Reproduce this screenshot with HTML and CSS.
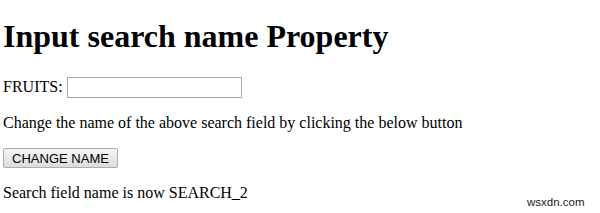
FILE: index.html
```html
<!DOCTYPE html>
<html lang="en">
<head>
<meta charset="utf-8">
<title>Input search name Property</title>
<link rel="stylesheet" href="styles.css">
</head>
<body>
  <h1>Input search name Property</h1>
  <p class="field">FRUITS: <input type="search" id="fruits" name="SEARCH_1"></p>
  <p>Change the name of the above search field by clicking the below button</p>
  <button type="button" class="change">CHANGE NAME</button>
  <p class="result">Search field name is now SEARCH_2</p>
  <div class="watermark">wsxdn.com</div>
</body>
</html>
```

FILE: styles.css
```css
body{
  margin: 0 3px;
  font-family: "Liberation Serif", "Times New Roman", serif;
  font-size: 16px;
  color: #000;
  background: #fff;
}
h1{
  font-size: 32px;
  margin: 18px 0 22px 0;
}
p{
  margin: 0 0 16px 0;
}
.field input{
  width: 175px;
  height: 21px;
  box-sizing: border-box;
  border: 1px solid #a9a9a9;
  padding: 0 2px;
  font-size: 13px;
  background: #fff;
}
.change{
  display: block;
  width: 115px;
  height: 20px;
  padding: 0;
  margin: 0 0 16px 0;
  font-family: "Liberation Sans", Arial, sans-serif;
  font-size: 13px;
  color: #000;
  background: linear-gradient(to bottom, #f5f5f5 0%, #dcdcdc 100%);
  border: 1px solid #acacac;
  border-radius: 2px;
}
.watermark{
  position: absolute;
  left: 527px;
  top: 196px;
  font-family: "Liberation Sans", Arial, sans-serif;
  font-size: 11.5px;
  color: #222;
}
```
